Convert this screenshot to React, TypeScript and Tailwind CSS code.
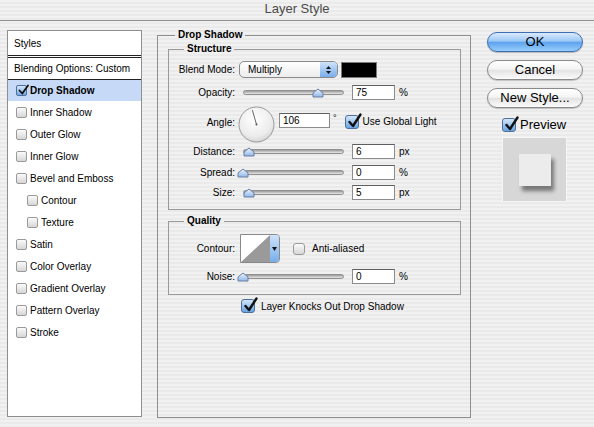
import React from "react";

const stripes =
  "bg-[repeating-linear-gradient(180deg,#f1f1f1_0px,#f1f1f1_2px,#eaeaea_2px,#eaeaea_4px)]";

const CheckMark = ({ big }: { big?: boolean }) =>
  big ? (
    <svg className="absolute left-[1px] top-[-3px] overflow-visible" width="15" height="16" viewBox="0 0 15 16">
      <path d="M2.5 9 L6 13 L13.5 1.5" fill="none" stroke="#111" strokeWidth="2.4" strokeLinecap="round" strokeLinejoin="round" />
    </svg>
  ) : (
    <svg className="absolute left-[1px] top-[-2px] overflow-visible" width="11" height="12" viewBox="0 0 11 12">
      <path d="M1.5 6.5 L4.3 9.5 L10 1.5" fill="none" stroke="#111" strokeWidth="1.8" strokeLinecap="round" strokeLinejoin="round" />
    </svg>
  );

const SmallBox = ({ checked }: { checked?: boolean }) => (
  <div
    className={
      checked
        ? "relative h-[11px] w-[11px] shrink-0 rounded-[2px] border border-[#4d6f9c] bg-[linear-gradient(180deg,#d4e6fb,#74a9e6)]"
        : "relative h-[11px] w-[11px] shrink-0 rounded-[2px] border border-[#9a9a9a] bg-[linear-gradient(180deg,#fbfbfb,#d6d6d6)]"
    }
  >
    {checked && <CheckMark />}
  </div>
);

const BigBox = ({ checked }: { checked?: boolean }) => (
  <div
    className={
      checked
        ? "relative h-[14px] w-[14px] shrink-0 rounded-[3px] border border-[#4d6f9c] bg-[linear-gradient(180deg,#d4e6fb,#6aa2e3)]"
        : "relative h-[12px] w-[12px] shrink-0 rounded-[3px] border border-[#9a9a9a] bg-[linear-gradient(180deg,#fbfbfb,#d6d6d6)]"
    }
  >
    {checked && <CheckMark big />}
  </div>
);

const Thumb = ({ pos }: { pos: string }) => (
  <svg className={`absolute top-[2px] ${pos}`} width="12" height="10" viewBox="0 0 12 10">
    <defs>
      <linearGradient id="th" x1="0" y1="0" x2="0" y2="1">
        <stop offset="0" stopColor="#eef5ff" />
        <stop offset="1" stopColor="#8fb6e8" />
      </linearGradient>
    </defs>
    <path d="M1 5 L6 1 L11 5 L11 9 L1 9 Z" fill="url(#th)" stroke="#6a7f9f" strokeWidth="1" strokeLinejoin="round" />
  </svg>
);

const Slider = ({ pos }: { pos: string }) => (
  <div className="relative ml-[8px] flex h-[14px] w-[101px] items-center">
    <div className="h-[5px] w-full rounded-full border border-[#8f8f8f] bg-[linear-gradient(180deg,#9a9a9a,#e8e8e8)]" />
    <Thumb pos={pos} />
  </div>
);

const Field = ({ value, className }: { value: string; className: string }) => (
  <div className={`flex h-[15px] items-center border border-[#8c8c8c] border-t-[#5f5f5f] bg-white pl-[3px] text-[10px] ${className}`}>
    {value}
  </div>
);

const Row = ({ label, className, children }: { label: string; className: string; children: React.ReactNode }) => (
  <div className={`flex items-center ${className}`}>
    <div className="w-[66px] text-right">{label}</div>
    {children}
  </div>
);

const SliderRow = ({ label, value, unit, pos, className }: { label: string; value: string; unit: string; pos: string; className: string }) => (
  <Row label={label} className={`h-[15px] ${className}`}>
    <Slider pos={pos} />
    <Field value={value} className="ml-[8px] w-[43px]" />
    <span className="ml-[4px]">{unit}</span>
  </Row>
);

const listItems: { name: string; indent?: boolean }[] = [
  { name: "Inner Shadow" },
  { name: "Outer Glow" },
  { name: "Inner Glow" },
  { name: "Bevel and Emboss" },
  { name: "Contour", indent: true },
  { name: "Texture", indent: true },
  { name: "Satin" },
  { name: "Color Overlay" },
  { name: "Gradient Overlay" },
  { name: "Pattern Overlay" },
  { name: "Stroke" },
];

const Dial = () => (
  <svg width="37" height="37" viewBox="0 0 37 37" className="ml-[3px] shrink-0">
    <defs>
      <radialGradient id="dl" cx="0.45" cy="0.35" r="0.7">
        <stop offset="0" stopColor="#ffffff" />
        <stop offset="0.7" stopColor="#ececec" />
        <stop offset="1" stopColor="#cfcfcf" />
      </radialGradient>
    </defs>
    <circle cx="18.5" cy="18.5" r="17.5" fill="url(#dl)" stroke="#9b9b9b" strokeWidth="1" />
    <line x1="18.5" y1="18.5" x2="14.4" y2="4.2" stroke="#555" strokeWidth="0.9" />
    <circle cx="18.5" cy="18.5" r="1" fill="#555" />
  </svg>
);

export default function App() {
  return (
    <div className={`h-[427px] w-[594px] overflow-hidden font-['Liberation_Sans',Arial,sans-serif] text-[10px] text-black ${stripes}`}>
      <div className="flex h-[21px] items-center justify-center border-b border-[#8f8f8f] pb-[2px] text-[13px] text-[#4a4a4a]">
        Layer Style
      </div>

      <div className="flex items-start">
        {/* styles list */}
        <div className="ml-[7px] mt-[9px] h-[387px] w-[135px] border border-[#8e8e8e] bg-white">
          <div className="flex h-[27px] items-center border-b-[3px] border-double border-[#222] pl-[6px]">Styles</div>
          <div className="flex h-[22px] items-center border-b border-[#222] pl-[6px]">Blending Options: Custom</div>
          <div className="flex h-[21px] items-center gap-[3px] bg-[#c6d9f7] pl-[8px] font-bold">
            <SmallBox checked />
            <span>Drop Shadow</span>
          </div>
          {listItems.map((it) => (
            <div key={it.name} className={`flex h-[22px] items-center gap-[3px] ${it.indent ? "pl-[19px]" : "pl-[8px]"}`}>
              <SmallBox />
              <span>{it.name}</span>
            </div>
          ))}
        </div>

        {/* settings */}
        <fieldset className="ml-[15px] mt-[7px] h-[390px] w-[314px] border border-[#8e8e8e] pl-[10px]">
          <legend className="ml-[7px] px-[3px] text-[10px] font-bold leading-[14px]">Drop Shadow</legend>

          <fieldset className="w-[293px] border border-[#9a9a9a] pb-[9px]">
            <legend className="ml-[15px] px-[3px] font-bold leading-[14px]">Structure</legend>
            <Row label="Blend Mode:" className="mt-[5px] h-[17px]">
              <div className="ml-[4px] flex h-[17px] w-[99px] overflow-hidden rounded-[5px] border border-[#8a8a8a] bg-[linear-gradient(180deg,#ffffff,#ececec)]">
                <div className="flex flex-1 items-center pl-[8px]">Multiply</div>
                <div className="flex w-[17px] flex-col items-center justify-center gap-[2px] bg-[linear-gradient(180deg,#cfe3fb,#78aeea)]">
                  <svg width="5" height="3" viewBox="0 0 5 3"><path d="M0 3 L2.5 0 L5 3 Z" fill="#111" /></svg>
                  <svg width="5" height="3" viewBox="0 0 5 3"><path d="M0 0 L2.5 3 L5 0 Z" fill="#111" /></svg>
                </div>
              </div>
              <div className="ml-[3px] h-[16px] w-[36px] border border-[#7b7b7b] bg-black" />
            </Row>
            <SliderRow label="Opacity:" value="75" unit="%" pos="left-[69px]" className="mt-[7px]" />
            <div className="mt-[6px] flex h-[37px] items-start">
              <div className="mt-[9px] w-[66px] text-right">Angle:</div>
              <Dial />
              <Field value="106" className="ml-[4px] mt-[7px] w-[51px]" />
              <span className="ml-[3px] mt-[6px] text-[9px]">°</span>
              <div className="ml-[8px] mt-[9px]"><BigBox checked /></div>
              <span className="ml-[4px] mt-[8px]">Use Global Light</span>
            </div>
            <SliderRow label="Distance:" value="6" unit="px" pos="left-[0px]" className="mt-[1px]" />
            <SliderRow label="Spread:" value="0" unit="%" pos="left-[-6px]" className="mt-[6px]" />
            <SliderRow label="Size:" value="5" unit="px" pos="left-[0px]" className="mt-[5px]" />
          </fieldset>

          <fieldset className="mt-[4px] w-[293px] border border-[#9a9a9a] pb-[10px]">
            <legend className="ml-[15px] px-[3px] font-bold leading-[14px]">Quality</legend>
            <Row label="Contour:" className="mt-[6px] h-[29px]">
              <div className="ml-[5px] flex h-[29px] w-[40px] overflow-hidden rounded-r-[4px] border border-[#8a8a8a] bg-white">
                <svg width="29" height="27" viewBox="0 0 29 27" className="shrink-0">
                  <path d="M0 27 L29 0 L29 27 Z" fill="#9a9a9a" />
                </svg>
                <div className="flex flex-1 items-center justify-center bg-[linear-gradient(180deg,#cfe3fb,#78aeea)]">
                  <svg width="5" height="4" viewBox="0 0 5 4"><path d="M0 0 L2.5 4 L5 0 Z" fill="#111" /></svg>
                </div>
              </div>
              <div className="ml-[13px]"><BigBox /></div>
              <span className="ml-[7px]">Anti-aliased</span>
            </Row>
            <SliderRow label="Noise:" value="0" unit="%" pos="left-[-6px]" className="mt-[6px]" />
          </fieldset>

          <div className="ml-[73px] mt-[4px] flex h-[14px] items-center">
            <BigBox checked />
            <span className="ml-[6px]">Layer Knocks Out Drop Shadow</span>
          </div>
        </fieldset>

        {/* buttons */}
        <div className="ml-[16px] mt-[11px] flex w-[96px] flex-col text-[13px]">
          <button className="flex h-[20px] items-center justify-center rounded-full border border-[#3d6db3] bg-[linear-gradient(180deg,#dbeafc_0%,#9cc8f6_45%,#5fa3ee_52%,#96cdfb_100%)] shadow-[0_1px_1px_rgba(0,0,0,0.25)]">
            OK
          </button>
          <button className="mt-[8px] flex h-[20px] items-center justify-center rounded-full border border-[#8a8a8a] bg-[linear-gradient(180deg,#ffffff_0%,#f4f4f4_45%,#e3e3e3_52%,#fbfbfb_100%)] shadow-[0_1px_1px_rgba(0,0,0,0.2)]">
            Cancel
          </button>
          <button className="mt-[8px] flex h-[20px] items-center justify-center rounded-full border border-[#8a8a8a] bg-[linear-gradient(180deg,#ffffff_0%,#f4f4f4_45%,#e3e3e3_52%,#fbfbfb_100%)] shadow-[0_1px_1px_rgba(0,0,0,0.2)]">
            New Style...
          </button>
          <div className="ml-[15px] mt-[10px] flex h-[14px] items-center">
            <BigBox checked />
            <span className="ml-[4px]">Preview</span>
          </div>
          <div className="ml-[15px] mt-[5px] flex h-[65px] w-[65px] items-center justify-center border border-[#f6f6f6] bg-[#d7d7d7]">
            <div className="h-[32px] w-[32px] bg-[#ececec] shadow-[3px_5px_4px_rgba(0,0,0,0.45)]" />
          </div>
        </div>
      </div>
    </div>
  );
}
